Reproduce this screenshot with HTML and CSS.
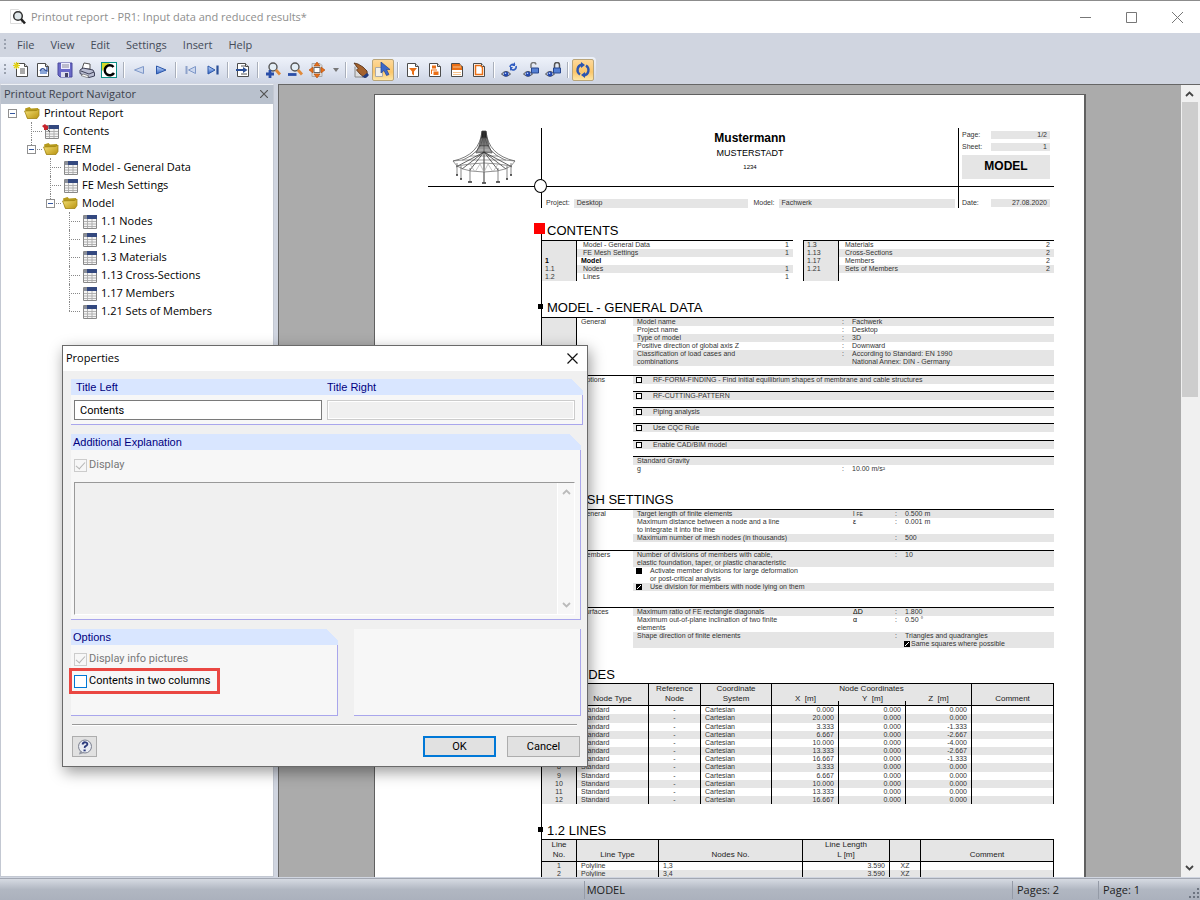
FILE: index.html
```html
<!DOCTYPE html>
<html lang="en">
<head>
<meta charset="utf-8">
<title>Printout report - PR1: Input data and reduced results*</title>
<link rel="stylesheet" href="styles.css">
</head>
<body>
<svg class="defs" aria-hidden="true">
  <defs>
    <linearGradient id="gold" x1="0" y1="0" x2="1" y2="1"><stop offset="0" stop-color="#f7e37a"/><stop offset="1" stop-color="#b8930f"/></linearGradient>
    <linearGradient id="blue" x1="0" y1="0" x2="0" y2="1"><stop offset="0" stop-color="#cfe2ff"/><stop offset="1" stop-color="#2f62c4"/></linearGradient>
    <symbol id="folder" viewBox="0 0 16 14"><path d="M1 2.500 5.500 1 7 2.500 14 2v3L13 12 3 12.500z" fill="#b59a1c"/><path d="M0.500 5 12.500 4.500 15 3v6.500L13 12.500H3.500z" fill="url(#gold)" stroke="#9a7d0c" stroke-width=".7"/></symbol>
    <symbol id="grid" viewBox="0 0 14 14"><path d="M.5.5h13v13H.5z" fill="#f4f4f4" stroke="#888"/><path d="M1 1h4v3H1z" fill="#8a8f9a"/><path d="M4 0h10v4H4z" fill="#33487f"/><path d="M1 6.500h12M1 9h12M1 11.500h12M4.500 4v9M9 4v9" stroke="#aaa" stroke-width=".9"/></symbol>
    <symbol id="page" viewBox="0 0 16 16"><path d="M2.500 1.500h8l3 3v10h-11z" fill="#fff" stroke="#4c4c4c"/><path d="M10.500 1.500v3h3" fill="#ddd" stroke="#4c4c4c"/></symbol>
    <symbol id="eye" viewBox="0 0 10 8"><path d="M.5 4Q5-1 9.500 4 5 8.500.5 4z" fill="#e8eefc" stroke="#333" stroke-width=".9"/><circle cx="5" cy="4" r="2.500" fill="#2549ad"/><circle cx="4.500" cy="3.300" r=".8" fill="#cfe0ff"/></symbol>
  </defs>
</svg>
<div class="app">
  <header class="titlebar">
    <svg width="18" height="18" viewBox="0 0 18 18"><path d="M1.500 1.500h8l3 3v11h-11z" fill="#fff" stroke="#ddd"/><circle cx="9" cy="8" r="4.300" fill="#dfe7ea" stroke="#333" stroke-width="1.500"/><path d="m12 11 4 4.500" stroke="#222" stroke-width="2.600"/></svg>
    <h1>Printout report - PR1: Input data and reduced results*</h1>
    <div class="winbtns">
      <button aria-label="Minimize"><svg width="11" height="11"><path d="M0 5.500h11" stroke="#777"/></svg></button>
      <button aria-label="Maximize"><svg width="11" height="11"><path d="M.5.5h10v10H.5z" fill="none" stroke="#777"/></svg></button>
      <button aria-label="Close"><svg width="11" height="11"><path d="m0 0 11 11M11 0 0 11" stroke="#777"/></svg></button>
    </div>
  </header>
  <nav class="menubar"><i class="grip"></i>
    <button>File</button><button>View</button><button>Edit</button><button>Settings</button><button>Insert</button><button>Help</button>
  </nav>
  <div class="toolrow">
  <div class="toolbar"><i class="grip"></i>
    <button aria-label="New"><svg><use href="#page" x="1"/><path d="M7 7h5M7 9h5M7 11h5" stroke="#555"/><path d="M3.500 0v7M0 3.500h7M1 1l5 5M6 1 1 6" stroke="#e2d114" stroke-width="1.200"/></svg></button>
    <button aria-label="Open"><svg><use href="#page"/><path d="M5 12V8h7v4z" fill="#8aa6d8"/><path d="M5 9q2-4 5-1l2 1v-4" fill="none" stroke="#35549c" stroke-width="1.300"/></svg></button>
    <button aria-label="Save"><svg><path d="M1 1h14v14H3l-2-2z" fill="#6a69c8" stroke="#4a4a9c"/><path d="M4 1h9v6H4z" fill="#eef"/><path d="M5 3h7M5 5h7" stroke="#889"/><path d="M4 10h8v5H4z" fill="#dde"/><path d="M8 11h3v4H8z" fill="#446"/></svg></button>
    <button aria-label="Print"><svg><path d="M3 7 5 1l6 1 0 5z" fill="#fff" stroke="#555"/><path d="m1 8 3-2 10 2 1.500 3v3L10 15.500 1 11.500z" fill="#b9bdd2" stroke="#3e4158"/><path d="m2 9 8 3 5-2" fill="none" stroke="#3e4158"/><path d="m4 12 6 2-2 1.500-6-2z" fill="#fff" stroke="#555" stroke-width=".6"/></svg></button>
    <button aria-label="Refresh"><svg><path d="M0 0h16v16H0z" fill="#0c8f86"/><path d="M1 1h14v14H1z" fill="#fff"/><path d="M1 1h8L1 9z" fill="#d6dc28"/><path d="M12.500 5A5 5 0 1 0 13 11" fill="none" stroke="#000" stroke-width="2.500"/></svg></button>
    <i class="sep"></i>
    <button aria-label="Previous"><svg><path d="M12.500 4.500v7L3.500 8z" fill="#cbd7ee" stroke="#7d97c8"/></svg></button>
    <button aria-label="Next"><svg><path d="M3.500 4v8L13 8z" fill="url(#blue)" stroke="#2b56a8"/></svg></button>
    <i class="sep"></i>
    <button aria-label="First"><svg><path d="M12.500 4.500v7L5.500 8z" fill="#cbd7ee" stroke="#7d97c8"/><path d="M3.500 4v8" stroke="#8fa3cb" stroke-width="2"/></svg></button>
    <button aria-label="Last"><svg><path d="M3 4v8l7-4z" fill="url(#blue)" stroke="#2b56a8"/><path d="M12.500 3.500v9" stroke="#2b4f96" stroke-width="2.200"/></svg></button>
    <i class="sep"></i>
    <button aria-label="Go to page"><svg><use href="#page"/><path d="M6 4h4M6 12h6" stroke="#555"/><path d="M1 8h8" stroke="#2b4f96" stroke-width="2"/><path d="m8 5 4.500 3L8 11z" fill="#2b4f96"/></svg></button>
    <i class="sep"></i>
    <button aria-label="Zoom in"><svg><circle cx="8" cy="5" r="4" fill="#e4eef6" stroke="#555" stroke-width="1.400"/><path d="m11 8 4 4.500" stroke="#e08a3a" stroke-width="2.800"/><path d="M5 8v8M1 12h8" stroke="#2a4ea8" stroke-width="2.800"/></svg></button>
    <button aria-label="Zoom out"><svg><circle cx="8" cy="5" r="4" fill="#e4eef6" stroke="#555" stroke-width="1.400"/><path d="m11 8 4 4.500" stroke="#e08a3a" stroke-width="2.800"/><path d="M1 12.500h8.500" stroke="#2a4ea8" stroke-width="2.800"/></svg></button>
    <button class="split" aria-label="Fit page"><svg><path d="M3 1.500h8l2 2v11H3z" fill="#ddd" stroke="#aaa"/><path d="M5 5.500h6v5H5z" fill="#fff" stroke="#666"/><path d="m8 0 3 4H5zM8 16l3-4H5zM0 8l4-3v6zM16 8l-4-3v6z" fill="#e8701a" stroke="#b04a08" stroke-width=".6"/></svg><svg class="drop" viewBox="0 0 6 4"><path d="M0 0h6L3 4z" fill="#777"/></svg></button>
    <i class="sep"></i>
    <button aria-label="Hand"><svg><path d="M2 4.500V15h8" fill="#ddd" stroke="#888"/><path d="m1 1 4 1 5 3 4 4 .500 5-3 1.500L7 12 3.500 8 5 6.500z" fill="#a4622e" stroke="#4e2a10" stroke-width=".8"/><path d="m9 15 5-4 2 2-3 3z" fill="#223d80"/></svg></button>
    <button class="on" aria-label="Select"><svg><path d="M.5 5.500h7v9h-7z" fill="#f2f0ea" stroke="#aaa"/><path d="M6 0v11l3-2.500 2.500 5 2.500-1-2.500-5H15z" fill="#3d68c9" stroke="#27468f" stroke-width=".7"/></svg></button>
    <i class="sep"></i>
    <button aria-label="Filter"><svg><use href="#page"/><path d="M4 6h8l-3 3.500v4l-2-1.500V9.500z" fill="#ea6f16"/></svg></button>
    <button aria-label="Paragraph"><svg><use href="#page"/><path d="M5 3.500h4v3H5zM6.500 9.500h5v3.500h-5z" fill="#ea6f16"/><path d="M4 8h6M4.500 8v4" stroke="#ea6f16"/></svg></button>
    <button aria-label="Header"><svg><use href="#page"/><path d="M3 2h7.500l2.500 3v3H3z" fill="#ea6f16"/><path d="M4 5h8M4 10.500h8M4 12.500h8" stroke="#f7c38d"/></svg></button>
    <button aria-label="Border"><svg><use href="#page"/><path d="M4.500 3.500h5l2 2v7h-7z" fill="#fff" stroke="#ea6f16" stroke-width="1.500"/></svg></button>
    <i class="sep"></i>
    <button aria-label="View refresh"><svg><use href="#eye" x="0" y="8" width="10" height="8"/><path d="M9 5a3 3 0 0 1 5-2M15 4a3 3 0 0 1-5 3" fill="none" stroke="#2f5cc0" stroke-width="1.600"/><path d="M14 0v4h-3zM9 9V5h3z" fill="#2f5cc0"/></svg></button>
    <button aria-label="View unlocked"><svg><use href="#eye" x="0" y="8" width="10" height="8"/><path d="M8 6V3.500a2.500 2.500 0 0 1 5-1" fill="none" stroke="#777" stroke-width="1.500"/><path d="M8.500 6h7v5h-7z" fill="#5580d4" stroke="#27468f"/></svg></button>
    <button aria-label="View locked"><svg><use href="#eye" x="0" y="8" width="10" height="8"/><path d="M9.500 6V3a2.500 2.500 0 0 1 5 0v3" fill="none" stroke="#555" stroke-width="1.500"/><path d="M8.500 6h7v5h-7z" fill="#5580d4" stroke="#27468f"/></svg></button>
    <i class="sep"></i>
    <button class="on" aria-label="Auto update"><svg><path d="M5 12.500A5.500 5.500 0 0 1 7 2.500M11 3.500a5.500 5.500 0 0 1-2 10" fill="none" stroke="#2c55b0" stroke-width="2.300"/><path d="m6 0 4 3-4 3zM10 16l-4-3 4-3z" fill="#2c55b0"/></svg></button>
  </div>
  </div>

  <main class="work">
    <aside class="nav">
      <div class="navhead"><span>Printout Report Navigator</span><button aria-label="Close navigator"><svg width="8" height="8"><path d="m0 0 8 8M8 0 0 8" stroke="#555" stroke-width="1.200"/></svg></button></div>
      <ul class="tree">
        <li class="root"><div class="node"><b class="toggle"></b><svg class="folder"><use href="#folder"/></svg>Printout Report</div>
          <ul>
            <li><div class="node"><svg class="leaf"><use href="#grid"/></svg>Contents<svg class="pin" viewBox="0 0 10 10"><path d="m1 3 3-2 2 2 1 0 0 4-4 0 0-2z" fill="#c8242c"/><path d="m6 6 3 3" stroke="#555"/></svg></div></li>
            <li class="last"><div class="node"><b class="toggle"></b><svg class="folder"><use href="#folder"/></svg>RFEM</div>
              <ul>
                <li><div class="node"><svg class="leaf"><use href="#grid"/></svg>Model - General Data</div></li>
                <li><div class="node"><svg class="leaf"><use href="#grid"/></svg>FE Mesh Settings</div></li>
                <li class="last"><div class="node"><b class="toggle"></b><svg class="folder"><use href="#folder"/></svg>Model</div>
                  <ul>
                    <li><div class="node"><svg class="leaf"><use href="#grid"/></svg>1.1 Nodes</div></li>
                    <li><div class="node"><svg class="leaf"><use href="#grid"/></svg>1.2 Lines</div></li>
                    <li><div class="node"><svg class="leaf"><use href="#grid"/></svg>1.3 Materials</div></li>
                    <li><div class="node"><svg class="leaf"><use href="#grid"/></svg>1.13 Cross-Sections</div></li>
                    <li><div class="node"><svg class="leaf"><use href="#grid"/></svg>1.17 Members</div></li>
                    <li class="last"><div class="node"><svg class="leaf"><use href="#grid"/></svg>1.21 Sets of Members</div></li>
                  </ul>
                </li>
              </ul>
            </li>
          </ul>
        </li>
      </ul>
    </aside>
    <section class="viewer">
      <div class="canvas">
      <article class="sheet">
        <div class="head">
          <div class="logo">
            <svg width="68" height="54" viewBox="0 0 68 54" fill="none" stroke="#444" stroke-width=".7">
              <path d="M32 1h4l1 7H31z" fill="#222"/><path d="M31 8h6l2 8H29z" fill="#777"/><path d="M29 16h10l3 7-8-1-8 1z" fill="#aaa"/>
              <path d="M32 1Q30 25 3 31M36 1Q38 25 65 31M34 1v52M33 8q-2 14-20 22M35 8q2 14 20 22"/>
              <path d="M29 14h10M28 18h12M25 22h18M20 26h28M12 30h44" stroke="#777"/>
              <path d="M34 22 6 37M34 22 62 37M34 22 20 40M34 22 48 40M34 22 12 39M34 22 56 39" stroke="#222"/>
              <path d="M3 31l4 5 6 3 8 2 13 1 13-1 8-2 6-3 4-5M3 31l10-1M65 31l-10-1M7 36l13-2 14-1 14 1 13 2" stroke="#666"/>
              <path d="M7 33v12M11 36v13M20 38v14M48 38v14M57 36v13M61 33v12M34 22v30" stroke="#555"/>
              <path d="M6 45h2M10 49h2M18 52h4M32 53h4M46 52h4M56 49h2M60 45h2" stroke="#333" stroke-width="1.500"/>
              <path d="M20 34 25 42 30 34 34 42 38 34 43 42 48 34" stroke="#aaa"/>
            </svg>
          </div>
          <div class="company"><strong>Mustermann</strong><span class="city">MUSTERSTADT</span><span class="zip">1234</span></div>
          <div class="pageinfo">
            <div class="field"><span>Page:</span><output>1/2</output></div>
            <div class="field"><span>Sheet:</span><output>1</output></div>
            <div class="kind">MODEL</div>
          </div>
          <div></div>
          <div class="project"><div class="field"><span>Project:</span><output>Desktop</output></div><div class="field"><span>Model:</span><output>Fachwerk</output></div></div>
          <div class="date"><div class="field"><span>Date:</span><output>27.08.2020</output></div></div>
          <i class="ring"></i>
        </div>

        <div class="body">
          <h2 class="sel">CONTENTS</h2>
          <div class="toc">
            <table><colgroup><col class="c35"><col><col class="c16"></colgroup>
              <tr><td class="no"></td><td>Model - General Data</td><td>1</td></tr>
              <tr class="s"><td class="no"></td><td>FE Mesh Settings</td><td>1</td></tr>
              <tr class="b"><td class="no">1</td><td>Model</td><td></td></tr>
              <tr class="s"><td class="no">1.1</td><td>Nodes</td><td>1</td></tr>
              <tr><td class="no">1.2</td><td>Lines</td><td>1</td></tr>
            </table>
            <table class="second"><colgroup><col class="c35"><col><col class="c16"></colgroup>
              <tr><td class="no">1.3</td><td>Materials</td><td>2</td></tr>
              <tr class="s"><td class="no">1.13</td><td>Cross-Sections</td><td>2</td></tr>
              <tr><td class="no">1.17</td><td>Members</td><td>2</td></tr>
              <tr class="s"><td class="no">1.21</td><td>Sets of Members</td><td>2</td></tr>
              <tr><td class="no"></td><td></td><td></td></tr>
            </table>
          </div>

          <h2>MODEL - GENERAL DATA</h2>
          <table class="spec"><colgroup><col class="c35"><col class="c56"><col class="c209"><col class="c10"><col></colgroup>
            <tr class="s"><td class="no"></td><td>General</td><td>Model name</td><td>:</td><td>Fachwerk</td></tr>
            <tr><td class="no"></td><td></td><td>Project name</td><td>:</td><td>Desktop</td></tr>
            <tr class="s"><td class="no"></td><td></td><td>Type of model</td><td>:</td><td>3D</td></tr>
            <tr><td class="no"></td><td></td><td>Positive direction of global axis Z</td><td>:</td><td>Downward</td></tr>
            <tr class="s"><td class="no"></td><td></td><td>Classification of load cases and<br>combinations</td><td>:</td><td>According to Standard: EN 1990<br>National Annex: DIN - Germany</td></tr>
            <tr class="gap"><td class="no"></td><td colspan="4"></td></tr>
            <tr class="s full"><td class="no"></td><td>Options</td><td colspan="3"><i class="box"></i>RF-FORM-FINDING - Find initial equilibrium shapes of membrane and cable structures</td></tr>
            <tr class="gap7"><td class="no"></td><td colspan="4"></td></tr>
            <tr class="s line"><td class="no"></td><td></td><td colspan="3"><i class="box"></i>RF-CUTTING-PATTERN</td></tr>
            <tr class="gap7"><td class="no"></td><td colspan="4"></td></tr>
            <tr class="s line"><td class="no"></td><td></td><td colspan="3"><i class="box"></i>Piping analysis</td></tr>
            <tr class="gap7"><td class="no"></td><td colspan="4"></td></tr>
            <tr class="s line"><td class="no"></td><td></td><td colspan="3"><i class="box"></i>Use CQC Rule</td></tr>
            <tr class="gap8"><td class="no"></td><td colspan="4"></td></tr>
            <tr class="s line"><td class="no"></td><td></td><td colspan="3"><i class="box"></i>Enable CAD/BIM model</td></tr>
            <tr class="gap7"><td class="no"></td><td colspan="4"></td></tr>
            <tr class="s line"><td class="no"></td><td></td><td colspan="3">Standard Gravity</td></tr>
            <tr><td class="no"></td><td></td><td>g</td><td>:</td><td>10.00 m/s²</td></tr>
          </table>

          <h2>FE MESH SETTINGS</h2>
          <table class="spec mesh"><colgroup><col class="c35"><col class="c56"><col class="c220"><col class="c42"><col class="c10"><col></colgroup>
            <tr class="s"><td class="no"></td><td>General</td><td>Target length of finite elements</td><td>l <small>FE</small></td><td>:</td><td>0.500 m</td></tr>
            <tr><td class="no"></td><td></td><td>Maximum distance between a node and a line<br>to integrate it into the line</td><td class="sym">ε</td><td>:</td><td>0.001 m</td></tr>
            <tr class="s"><td class="no"></td><td></td><td>Maximum number of mesh nodes (in thousands)</td><td></td><td>:</td><td>500</td></tr>
            <tr class="gap8"><td class="no"></td><td colspan="5"></td></tr>
            <tr class="s full"><td class="no"></td><td>Members</td><td>Number of divisions of members with cable,<br>elastic foundation, taper, or plastic characteristic</td><td></td><td>:</td><td>10</td></tr>
            <tr><td class="no"></td><td></td><td colspan="4" class="opt"><i class="box fill"></i>Activate member divisions for large deformation<br>or post-critical analysis</td></tr>
            <tr class="s"><td class="no"></td><td></td><td colspan="4" class="opt"><i class="box tick"></i>Use division for members with node lying on them</td></tr>
            <tr class="gap16"><td class="no"></td><td colspan="5"></td></tr>
            <tr class="s full"><td class="no"></td><td>Surfaces</td><td>Maximum ratio of FE rectangle diagonals</td><td class="sym">ΔD</td><td>:</td><td>1.800</td></tr>
            <tr><td class="no"></td><td></td><td>Maximum out-of-plane inclination of two finite<br>elements</td><td class="sym">α</td><td>:</td><td>0.50 °</td></tr>
            <tr class="s"><td class="no"></td><td></td><td>Shape direction of finite elements<br>&nbsp;</td><td></td><td>:</td><td class="near">Triangles and quadrangles<br><i class="box tick"></i>Same squares where possible</td></tr>
          </table>

          <h2 class="tight">1.1 NODES</h2>
          <table class="data nodes">
            <colgroup><col class="c35"><col class="c72"><col class="c52"><col class="c71"><col class="c67"><col class="c67"><col class="c66"><col></colgroup>
            <thead>
              <tr><th>Node</th><th></th><th>Reference</th><th>Coordinate</th><th colspan="3">Node Coordinates</th><th></th></tr>
              <tr><th>No.</th><th>Node Type</th><th>Node</th><th>System</th><th class="ax">X&nbsp; [m]</th><th class="ax">Y&nbsp; [m]</th><th>Z&nbsp; [m]</th><th>Comment</th></tr>
            </thead>
            <tbody>
              <tr><td>1</td><td>Standard</td><td>-</td><td>Cartesian</td><td>0.000</td><td>0.000</td><td>0.000</td><td></td></tr>
              <tr><td>2</td><td>Standard</td><td>-</td><td>Cartesian</td><td>20.000</td><td>0.000</td><td>0.000</td><td></td></tr>
              <tr><td>3</td><td>Standard</td><td>-</td><td>Cartesian</td><td>3.333</td><td>0.000</td><td>-1.333</td><td></td></tr>
              <tr><td>4</td><td>Standard</td><td>-</td><td>Cartesian</td><td>6.667</td><td>0.000</td><td>-2.667</td><td></td></tr>
              <tr><td>5</td><td>Standard</td><td>-</td><td>Cartesian</td><td>10.000</td><td>0.000</td><td>-4.000</td><td></td></tr>
              <tr><td>6</td><td>Standard</td><td>-</td><td>Cartesian</td><td>13.333</td><td>0.000</td><td>-2.667</td><td></td></tr>
              <tr><td>7</td><td>Standard</td><td>-</td><td>Cartesian</td><td>16.667</td><td>0.000</td><td>-1.333</td><td></td></tr>
              <tr><td>8</td><td>Standard</td><td>-</td><td>Cartesian</td><td>3.333</td><td>0.000</td><td>0.000</td><td></td></tr>
              <tr><td>9</td><td>Standard</td><td>-</td><td>Cartesian</td><td>6.667</td><td>0.000</td><td>0.000</td><td></td></tr>
              <tr><td>10</td><td>Standard</td><td>-</td><td>Cartesian</td><td>10.000</td><td>0.000</td><td>0.000</td><td></td></tr>
              <tr><td>11</td><td>Standard</td><td>-</td><td>Cartesian</td><td>13.333</td><td>0.000</td><td>0.000</td><td></td></tr>
              <tr><td>12</td><td>Standard</td><td>-</td><td>Cartesian</td><td>16.667</td><td>0.000</td><td>0.000</td><td></td></tr>
            </tbody>
          </table>

          <h2 class="tight">1.2 LINES</h2>
          <table class="data lines">
            <colgroup><col class="c35"><col class="c82"><col class="c144"><col class="c87"><col class="c31"><col></colgroup>
            <thead>
              <tr><th>Line</th><th></th><th></th><th>Line Length</th><th></th><th></th></tr>
              <tr><th>No.</th><th>Line Type</th><th>Nodes No.</th><th>L [m]</th><th></th><th>Comment</th></tr>
            </thead>
            <tbody>
              <tr><td>1</td><td>Polyline</td><td>1,3</td><td>3.590</td><td>XZ</td><td></td></tr>
              <tr><td>2</td><td>Polyline</td><td>3,4</td><td>3.590</td><td>XZ</td><td></td></tr>
            </tbody>
          </table>
        </div>
      </article>
      </div>
      <div class="scroll">
        <svg width="9" height="6"><path d="m1 5 3.500-3.500L8 5" fill="none" stroke="#444" stroke-width="1.800"/></svg>
        <i class="thumb"></i>
        <svg width="9" height="6"><path d="m1 1 3.500 3.500L8 1" fill="none" stroke="#444" stroke-width="1.800"/></svg>
      </div>
    </section>
  </main>

  <footer class="status"><span class="ready"></span><span class="model">MODEL</span><span class="pages">Pages: 2</span><span class="current">Page: 1</span>
    <svg width="10" height="11" viewBox="0 0 10 11"><path d="M8 0h2v2H8zM4 4h2v2H4zM8 4h2v2H8zM0 8h2v2H0zM4 8h2v2H4zM8 8h2v2H8z" fill="#6d7480"/></svg>
  </footer>

  <form class="dialog" role="dialog" aria-label="Properties">
    <div class="dtitle"><span>Properties</span><button type="button" aria-label="Close"><svg width="11" height="11"><path d="m.5.5 10 10M10.500.5l-10 10" stroke="#111" stroke-width="1.200"/></svg></button></div>
    <div class="dbody">
      <section class="group titles">
        <div class="ghead"><label for="tl">Title Left</label><label for="tr">Title Right</label></div>
        <div class="gbody"><input id="tl" type="text" value="Contents"><input id="tr" type="text" disabled></div>
      </section>
      <section class="group explain">
        <div class="ghead"><label for="ex">Additional Explanation</label></div>
        <div class="gbody">
          <label class="check off"><input type="checkbox" checked disabled>Display</label>
          <div class="memo"><textarea id="ex" disabled></textarea><div class="mscroll"><svg width="9" height="6"><path d="m1 5 3.500-3.500L8 5" fill="none" stroke="#bbb" stroke-width="1.800"/></svg><svg width="9" height="6"><path d="m1 1 3.500 3.500L8 1" fill="none" stroke="#bbb" stroke-width="1.800"/></svg></div></div>
        </div>
      </section>
      <div class="pair">
        <section class="group options">
          <div class="ghead"><span>Options</span></div>
          <div class="gbody">
            <label class="check off"><input type="checkbox" checked disabled>Display info pictures</label>
            <label class="check mark"><input type="checkbox">Contents in two columns</label>
          </div>
        </section>
        <section class="group blank"></section>
      </div>
      <hr>
      <div class="actions">
        <button type="button" class="help" aria-label="Help"><svg width="16" height="16" viewBox="0 0 16 16"><circle cx="8" cy="7.500" r="6.500" fill="#e9ecf3" stroke="#7c8190"/><path d="m3 12-1 3.500 5-1.500z" fill="#9296a3"/><path d="M5.500 5.500q.5-2.500 3-2.200 2.500.5 1.700 2.500Q9.500 7 8 7.500L7.600 9" fill="none" stroke="#2b3a7c" stroke-width="1.800"/><path d="M6.500 10.500h2.200v1.800H6.500z" fill="#2b3a7c"/></svg></button>
        <button type="button" class="ok">OK</button>
        <button type="button" class="cancel">Cancel</button>
      </div>
    </div>
  </form>
</div>
</body>
</html>
```
FILE: styles.css
```css
* { box-sizing: border-box; }
body { margin: 0; font: 11px/18px "Open Sans", "Noto Sans", sans-serif; color: #111; }
button { border: 0; background: none; padding: 0; font: inherit; color: inherit; }
svg { display: block; flex: none; }
ul { list-style: none; margin: 0; padding: 0; }
.defs { position: absolute; width: 0; height: 0; }
.app { height: 100vh; display: flex; flex-direction: column; position: relative; overflow: hidden; background: #d0d5e0; }

.titlebar { flex: none; height: 33px; display: flex; align-items: center; padding-left: 9px; gap: 4px; background: #fff; border-top: 1px solid #8c8c8c; }
.titlebar h1 { flex: 1; margin: 0; font-size: 11px; font-weight: 400; color: #8e8e8e; }
.winbtns { display: flex; }
.winbtns button { width: 46px; height: 32px; display: flex; align-items: center; justify-content: center; }

.menubar { flex: none; height: 24px; display: flex; align-items: center; gap: 16px; padding-left: 4px; color: #444b58; }
.grip { flex: none; width: 2px; height: 12px; background: repeating-linear-gradient(#9aa1ae 0 2px, transparent 2px 4px); }
.menubar .grip { margin-right: -5px; }
.toolrow { flex: none; height: 27px; }
.toolbar { display: inline-flex; align-items: center; height: 26px; padding: 0 2px 0 4px; border-radius: 0 4px 4px 0; background: linear-gradient(#eef2fa, #dbe1ee 60%, #cdd4e3); vertical-align: top; }
.toolbar .grip { margin-right: 4px; }
.toolbar button { width: 22px; height: 22px; display: flex; align-items: center; justify-content: center; }
.toolbar svg { width: 16px; height: 16px; }
.toolbar .on { border: 1px solid #b9a57a; border-radius: 2px; background: linear-gradient(#fdd89a, #fbc66a 60%, #fde6a6); }
.toolbar .split { width: 36px; gap: 8px; }
.toolbar .split .drop { width: 6px; height: 4px; }
.sep { width: 8px; height: 16px; background: linear-gradient(90deg, transparent 3px, #a9afbb 3px 4px, #fff 4px 5px, transparent 5px); }

.work { flex: 1; min-height: 0; display: flex; gap: 4px; padding-bottom: 1px; }
.nav { flex: none; width: 274px; display: flex; flex-direction: column; border: 1px solid #c3c8d2; border-top-color: #eef1f6; background: #fff; }
.navhead { flex: none; height: 19px; display: flex; align-items: center; justify-content: space-between; padding: 0 5px 1px 3px; background: #b9c1cd; color: #3d434d; }
.navhead button { line-height: 0; }
.tree { padding-left: 7px; }
.tree ul { margin-left: 19px; }
.tree .root > ul { margin-left: 23px; }
.tree li { position: relative; }
.tree .root ul > li::before { content: ""; position: absolute; left: 0; top: 0; bottom: 0; border-left: 1px dotted #888; }
.tree .root ul > li.last::before { bottom: auto; height: 9px; }
.node { position: relative; display: flex; align-items: center; height: 18px; gap: 4px; color: #000; }
.root ul .node::before { content: ""; width: 11px; margin-right: -3px; border-top: 1px dotted #888; }
.toggle { position: relative; flex: none; width: 9px; height: 9px; border: 1px solid #909090; background: linear-gradient(90deg, transparent 1px, #3557a0 1px 6px, transparent 6px) 0 3px / 7px 1px no-repeat #fff; z-index: 1; }
.root ul .toggle { margin-left: -16px; }
.toggle + .folder { margin-left: 3px; }
.folder { width: 16px; height: 14px; }
.leaf { width: 14px; height: 14px; margin: 1px 0 0 2px; }
.pin { position: absolute; left: 10px; top: 1px; width: 10px; height: 10px; }

.viewer { flex: 1; min-width: 0; display: flex; border: solid #666; border-width: 1px 0 0 1px; background: #ababab; }
.canvas { flex: 1; min-width: 0; overflow: hidden; padding-top: 9px; }
.scroll { flex: none; width: 19px; display: flex; flex-direction: column; align-items: center; padding: 6px 2px 6px 0; gap: 5px; background: #f0f0f0; }
.scroll svg:last-child { margin-top: auto; }
.thumb { width: 16px; height: 295px; background: #cdcdcd; }

.sheet { width: 712px; min-height: 1000px; margin: 0 auto; padding: 33px 30px 0 53px; background: #fff; border: 1px solid #606060; border-right-width: 2px; font: 7px/8px "Liberation Sans", Arial, sans-serif; color: #333; }
.head { position: relative; display: grid; grid-template-columns: 113px 1fr 96px; grid-template-rows: 59px 21px; }
.head > div { border-left: 1px solid #000; }
.head > div:nth-child(-n+3) { border-bottom: 1px solid #000; }
.head > div:nth-child(3n+1) { border-left: 0; }
.logo { padding: 2px 0 0 22px; }
.company { display: flex; flex-direction: column; align-items: center; padding-top: 3px; color: #000; }
.company strong { font-size: 12px; line-height: 15px; }
.city { font-size: 9px; line-height: 15px; }
.zip { font-size: 6px; line-height: 13px; }
.field { display: flex; justify-content: space-between; gap: 4px; }
.field output { background: #e5e5e5; }
.pageinfo { display: flex; flex-direction: column; gap: 4px; padding: 3px 4px 0 3px; }
.pageinfo output, .date output { width: 59px; padding-right: 3px; text-align: right; }
.kind { height: 24px; background: #e5e5e5; color: #000; text-align: center; font: bold 12px/22px "Liberation Sans", Arial, sans-serif; }
.project { display: grid; grid-template-columns: 1fr 1fr; gap: 6px; padding: 12px 3px 0 4px; }
.project output { flex: 1; padding-left: 3px; }
.date { padding: 12px 4px 0 3px; }
.ring { position: absolute; left: 106px; top: 51px; width: 13px; height: 14px; border: 1px solid #000; border-radius: 50%; background: #fff; }

.body { margin-left: 113px; border-left: 1px solid #000; }
h2 { position: relative; margin: 19px 0 0; padding: 0 0 1px 5px; font-size: 13px; line-height: 16px; font-weight: 400; color: #000; }
h2::before { content: ""; position: absolute; left: -4px; top: 4px; width: 5px; height: 5px; background: #000; }
h2.tight { padding-bottom: 0; }
h2.sel { margin-top: 15px; }
h2.sel::before { left: -8px; top: 0; width: 11px; height: 11px; background: #f00; }
table { width: 100%; table-layout: fixed; border-spacing: 0; border-top: 1px solid #000; }
td, th { padding: 0; height: 8px; vertical-align: top; text-align: left; font-weight: 400; white-space: nowrap; }
.no { background: #e5e5e5; border-right: 1px solid #000; }
.c10 { width: 10px; } .c16 { width: 16px; } .c31 { width: 31px; } .c35 { width: 35px; } .c42 { width: 42px; }
.c52 { width: 52px; } .c56 { width: 56px; } .c66 { width: 66px; } .c67 { width: 67px; } .c71 { width: 71px; }
.c72 { width: 72px; } .c82 { width: 82px; } .c87 { width: 87px; } .c144 { width: 144px; } .c209 { width: 209px; } .c220 { width: 220px; }

.toc { display: grid; grid-template-columns: 1fr 1fr; gap: 10px; }
.toc .no { padding-left: 3px; }
.toc td:nth-child(2) { padding-left: 6px; }
.toc .s td { background: #e5e5e5; }
.toc td:last-child { text-align: right; padding-right: 4px; }
.toc .b td { font-weight: 700; color: #000; }
.toc .b td:nth-child(2) { padding-left: 4px; }
.toc .second { border-left: 1px solid #000; }

.spec td:nth-child(2), .spec td:nth-child(3) { padding-left: 4px; }
.spec .s td:nth-child(n+3) { background: #e5e5e5; }
.spec .full td:not(.no), .spec .line td:nth-child(n+3) { border-top: 1px solid #000; }
.gap td { height: 9px; } .gap7 td { height: 7px; } .gap8 td { height: 8px; } .gap16 td { height: 16px; }
.box { display: inline-block; width: 6px; height: 6px; margin: 1px 11px 0 -1px; border: 1px solid #000; background: #fff; vertical-align: top; }
.box.fill { background: #000; }
.box.tick { background: linear-gradient(135deg, #000 45%, #fff 45% 60%, #000 60%); }
.spec .opt:nth-child(3) { padding-left: 17px; }
.opt .box { margin: 1px 8px 0 -14px; }
.near .box { margin-right: 1px; }
.mesh small { font-size: 5px; line-height: 1; }
.mesh .sym { color: #000; }

.data { border-right: 1px solid #000; }
.data th { height: 10px; background: #e5e5e5; font-size: 8px; line-height: 10px; text-align: center; color: #222; }
.data th:not(:last-child), .data td:not(:last-child) { border-right: 1px solid #000; }
.data thead tr:last-child th { height: 12px; border-bottom: 1px solid #000; }
.data td:first-child { background: #e5e5e5; text-align: center; }
.data tbody tr:nth-child(even) td { background: #e5e5e5; }
.data tbody tr:nth-child(6n+2) td { height: 9px; }
.data td:nth-child(2), .data td:nth-child(4) { padding-left: 4px; }
.nodes td:nth-child(3) { text-align: center; }
.nodes td:nth-child(n+5) { text-align: right; padding-right: 4px; }
.nodes .ax:not(:last-child) { border-right: 0; background: linear-gradient(#000, #000) right bottom / 1px 4px no-repeat #e5e5e5; }
.lines td:nth-child(3) { padding-left: 4px; }
.lines td:nth-child(4) { text-align: right; padding-right: 4px; }
.lines td:nth-child(5) { text-align: center; }

.status { flex: none; height: 22px; display: flex; align-items: center; border-top: 1px solid #a3a8b3; background: linear-gradient(#d6dae2, #b1b7c2 50%, #abb1bd); color: #222; }
.status .ready { flex: 584; }
.status .model { flex: 427; }
.status span { line-height: 18px; padding-left: 2px; border-left: 1px solid #959ba7; }
.status .ready { border: 0; }
.status .pages, .status .current { flex: none; width: 86px; padding-left: 4px; }
.status svg { align-self: flex-end; margin: 0 1px 1px 5px; }

.dialog { position: absolute; left: 62px; top: 345px; width: 526px; border: 1px solid #6a6a6a; background: #f0f0f0; box-shadow: 2px 5px 14px rgba(0, 0, 0, .4); font: 11px/18px Roboto, "Open Sans", sans-serif; }
.dtitle { display: flex; align-items: center; justify-content: space-between; height: 25px; padding: 0 9px 1px 3px; background: #fff; color: #000; font-family: "Open Sans", "Noto Sans", sans-serif; }
.dtitle button { line-height: 0; }
.dbody { padding: 8px 6px 9px 8px; }
.group { border: 0 solid #a9a6ec; border-width: 0 1px 1px 0; background: #f7f7f7; }
.ghead { display: grid; height: 16px; margin-right: -1px; padding-left: 2px; background: linear-gradient(225deg, #f0f0f0 8px, #d9e6ff 8px); color: #000080; font: 11px/16px "Liberation Sans", Arial, sans-serif; }
.titles { margin: 0 -2px 9px 0; }
.titles .ghead { grid-template-columns: 251px 1fr; padding-left: 5px; }
.titles .gbody { display: grid; grid-template-columns: 1fr 1fr; gap: 5px; padding: 5px 7px 4px 3px; }
.dialog input[type=text] { min-width: 0; width: 100%; height: 20px; padding: 0 5px; border: 1px solid #7a7a7a; background: #fff; font: inherit; color: #000; }
.dialog input[type=text]:disabled { border-color: #ccc; background: #f0f0f0; box-shadow: inset 0 0 0 1px #fff; }
.explain { margin-bottom: 9px; }
.explain .gbody { padding: 6px 5px 4px 3px; }
.check { display: flex; align-items: center; gap: 2px; height: 18px; color: #000; }
.check.off { color: #777; }
.check input { position: relative; appearance: none; width: 13px; height: 13px; margin: 0; border: 1px solid #0078d7; background: #fff; }
.check input:disabled { border-color: #ccc; background: #f7f7f7; }
.check input:checked::before { content: ""; position: absolute; left: 3px; top: 0; width: 4px; height: 8px; border: solid #b5b5b5; border-width: 0 1px 1px 0; rotate: 42deg; }
.memo { display: flex; height: 133px; margin-top: 8px; border: 1px solid; border-color: #999 #fff #fff #999; }
.memo textarea { flex: 1; min-width: 0; border: 0; padding: 2px; resize: none; background: #f0f0f0; }
.mscroll { width: 17px; display: flex; flex-direction: column; justify-content: space-between; align-items: center; padding: 6px 0; border-left: 1px solid #fff; }
.pair { display: grid; grid-template-columns: 267px 1fr; gap: 16px; }
.pair .group { height: 87px; }
.options .gbody { padding: 5px 0 0 3px; }
.mark { position: relative; width: max-content; margin-top: 4px; }
.mark::after { content: ""; position: absolute; inset: -4px -9px -4px -5px; border: 3px solid #ea4742; }
.dialog hr { margin: 8px 4px 0 1px; border: 0; border-top: 1px solid #999; border-bottom: 1px solid #fff; }
.actions { display: flex; gap: 11px; margin-top: 10px; padding: 0 1px; }
.actions button { width: 73px; height: 21px; border: 1px solid #adadad; background: #e1e1e1; color: #000; }
.actions .help { width: 25px; margin-right: auto; display: flex; align-items: center; justify-content: center; }
.actions .ok { border: 2px solid #0078d7; }
```
